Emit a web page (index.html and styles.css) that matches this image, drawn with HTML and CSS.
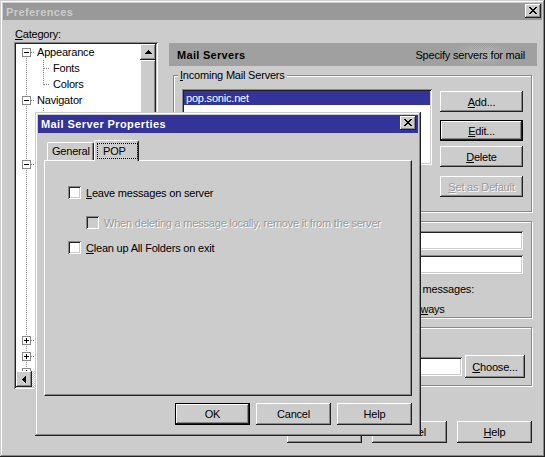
FILE: index.html
```html
<!DOCTYPE html>
<html lang="en">
<head>
    <meta charset="UTF-8">
    <title>Preferences</title>
    <link rel="stylesheet" href="styles.css">
</head>
<body>
    <div class="window prefs">
        <div class="titlebar inactive">
            <span class="title">Preferences</span>
            <span class="close-btn">
                <svg width="8" height="7" viewBox="0 0 8 7"><path d="M0 0h2v1H0zM6 0h2v1H6zM1 1h2v1H1zM5 1h2v1H5zM2 2h4v1H2zM3 3h2v1H3zM2 4h4v1H2zM1 5h2v1H1zM5 5h2v1H5zM0 6h2v1H0zM6 6h2v1H6z"/></svg>
            </span>
        </div>

        <div class="prefs-main">
            <div class="category">
                <div class="field-label"><u>C</u>ategory:</div>
                <div class="tree">
                    <div class="tree-items">
                        <div class="node"><span class="twisty"></span><span class="branch"></span>Appearance</div>
                        <div class="children">
                            <div class="node leaf"><span class="branch"></span>Fonts</div>
                            <div class="node leaf"><span class="branch"></span>Colors</div>
                        </div>
                        <div class="node"><span class="twisty"></span><span class="branch"></span>Navigator</div>
                        <div class="children">
                            <div class="node leaf"><span class="branch"></span>Languages</div>
                            <div class="node leaf"><span class="branch"></span>Applications</div>
                            <div class="node leaf"><span class="branch"></span>Smart Browsing</div>
                        </div>
                        <div class="node"><span class="twisty"></span><span class="branch"></span>Mail &amp; Newsgroups</div>
                        <div class="children">
                            <div class="node leaf"><span class="branch"></span>Identity</div>
                            <div class="node leaf current"><span class="branch"></span>Mail Servers</div>
                            <div class="node leaf"><span class="branch"></span>Newsgroup Servers</div>
                            <div class="node leaf"><span class="branch"></span>Addressing</div>
                            <div class="node leaf"><span class="branch"></span>Messages</div>
                            <div class="node leaf"><span class="branch"></span>Window Settings</div>
                            <div class="node leaf"><span class="branch"></span>Copies and Folders</div>
                            <div class="node leaf"><span class="branch"></span>Formatting</div>
                            <div class="node leaf"><span class="branch"></span>Return Receipts</div>
                            <div class="node leaf"><span class="branch"></span>Disk Space</div>
                        </div>
                        <div class="node"><span class="twisty closed"></span><span class="branch"></span>Roaming Access</div>
                        <div class="node"><span class="twisty closed"></span><span class="branch"></span>Composer</div>
                        <div class="node"><span class="twisty closed"></span><span class="branch"></span>Offline</div>
                        <div class="node"><span class="twisty closed"></span><span class="branch"></span>Advanced</div>
                    </div>
                    <div class="vscroll">
                        <span class="scroll-btn">
                            <svg width="7" height="4" viewBox="0 0 7 4"><path d="M3 0h1v1h1v1h1v1h1v1H0V3h1V2h1V1h1z"/></svg>
                        </span>
                        <div class="scroll-track"><div class="scroll-thumb"></div></div>
                    </div>
                    <div class="hscroll">
                        <span class="scroll-btn">
                            <svg width="4" height="7" viewBox="0 0 4 7"><path d="M3 0h1v7H3V6H2V5H1V4H0V3h1V2h1V1h1z"/></svg>
                        </span>
                        <div class="scroll-track"></div>
                    </div>
                    <div class="scroll-corner"></div>
                </div>
            </div>

            <div class="pane">
                <div class="pane-header">
                    <span class="pane-title">Mail Servers</span>
                    <span class="pane-desc">Specify servers for mail</span>
                </div>

                <div class="group group-incoming">
                    <div class="group-title"><u>I</u>ncoming Mail Servers</div>
                    <div class="incoming-row">
                        <div class="listbox">
                            <div class="list-item selected">pop.sonic.net</div>
                        </div>
                        <div class="btn-col">
                            <button class="btn btn-add"><u>A</u>dd...</button>
                            <button class="btn btn-edit default"><u>E</u>dit...</button>
                            <button class="btn btn-delete"><u>D</u>elete</button>
                            <button class="btn btn-set disabled"><u>S</u>et as Default</button>
                        </div>
                    </div>
                </div>

                <div class="group group-outgoing">
                    <div class="group-title">Outgoing Mail Server</div>
                    <div class="form-line first">
                        <label>Outgoing mail (SMTP) server:</label>
                        <span class="textbox"></span>
                    </div>
                    <div class="form-line">
                        <label>Outgoing mail server user name:</label>
                        <span class="textbox"></span>
                    </div>
                    <div class="note">Use SSL or TLS for outgoing messages:</div>
                    <div class="radios">
                        <span class="radio"><span class="radio-dot"></span><span><u>N</u>ever</span></span>
                        <span class="radio"><span class="radio-dot"></span><span><u>I</u>f Possible</span></span>
                        <span class="radio"><span class="radio-dot"></span><span>Al<u>w</u>ays</span></span>
                    </div>
                </div>

                <div class="group group-local">
                    <div class="group-title">Local mail directory</div>
                    <div class="dir-row">
                        <span class="textbox dir-box"></span>
                        <button class="btn btn-choose"><u>C</u>hoose...</button>
                    </div>
                </div>
            </div>
        </div>

        <div class="button-row prefs-buttons">
            <button class="btn">OK</button>
            <button class="btn">Cancel</button>
            <button class="btn"><u>H</u>elp</button>
        </div>
    </div>

    <!-- modal server dialog on top of the preferences window -->
    <div class="window dialog">
        <div class="titlebar">
            <span class="title">Mail Server Properties</span>
            <span class="close-btn">
                <svg width="8" height="7" viewBox="0 0 8 7"><path d="M0 0h2v1H0zM6 0h2v1H6zM1 1h2v1H1zM5 1h2v1H5zM2 2h4v1H2zM3 3h2v1H3zM2 4h4v1H2zM1 5h2v1H1zM5 5h2v1H5zM0 6h2v1H0zM6 6h2v1H6z"/></svg>
            </span>
        </div>

        <div class="tabs">
            <div class="tab">General</div>
            <div class="tab active"><span class="focus">POP</span></div>
        </div>

        <div class="tab-panel">
            <div class="check check-leave"><span class="checkbox"></span><span><u>L</u>eave messages on server</span></div>
            <div class="check check-delete sub disabled"><span class="checkbox"></span><span>When deleting a message locally, remove it from the server</span></div>
            <div class="check check-clean"><span class="checkbox"></span><span><u>C</u>lean up All Folders on exit</span></div>
        </div>

        <div class="button-row dialog-buttons">
            <button class="btn default">OK</button>
            <button class="btn">Cancel</button>
            <button class="btn">Help</button>
        </div>
    </div>
</body>
</html>
```

FILE: styles.css
```css
:root {
    --face: #cccccc;
    --light: #ffffff;
    --shadow: #888888;
    --dark: #222222;
    --title-active: #333399;
    --title-inactive: #999999;
    --header: #a0a0a0;
    --select: #333399;
    --raised: inset -1px -1px var(--dark), inset 1px 1px var(--light), inset -2px -2px var(--shadow);
    --sunken: inset 1px 1px var(--shadow), inset -1px -1px var(--light), inset 2px 2px var(--dark), inset -2px -2px var(--face);
}

* {
    box-sizing: border-box;
}

body {
    margin: 0;
    background: var(--face);
    font-family: "Liberation Sans", Arial, sans-serif;
    font-size: 11px;
    letter-spacing: -0.2px;
    color: #000;
}

u {
    text-decoration: underline;
    text-underline-offset: 1px;
}

/* windows */

.window {
    background: var(--face);
    box-shadow: inset -1px -1px var(--dark), inset 1px 1px var(--face), inset -2px -2px var(--shadow), inset 2px 2px var(--light);
    padding: 3px;
    display: flex;
    flex-direction: column;
}

.prefs {
    width: 545px;
    height: 457px;
}

.dialog {
    position: absolute;
    left: 35px;
    top: 112px;
    width: 386px;
    height: 324px;
}

.titlebar {
    height: 18px;
    display: flex;
    align-items: flex-start;
    justify-content: space-between;
    padding: 1px 2px 0 3px;
    background: var(--title-active);
    color: #fff;
}

.titlebar.inactive {
    height: 17px;
    padding-right: 1px;
    background: var(--title-inactive);
    color: var(--face);
}

.title {
    font-weight: bold;
    letter-spacing: 0.4px;
    line-height: 16px;
}

.close-btn {
    width: 16px;
    height: 14px;
    display: flex;
    align-items: center;
    justify-content: center;
    background: var(--face);
    box-shadow: var(--raised);
}

.close-btn svg {
    margin: 0 1px 1px 0;
}

/* buttons */

.btn {
    width: 75px;
    height: 21px;
    padding: 0;
    border: none;
    background: var(--face);
    box-shadow: var(--raised);
    font: inherit;
    letter-spacing: inherit;
    color: #000;
}

.btn.default {
    border: 1px solid #000;
}

.btn.disabled {
    color: #999;
    text-shadow: 1px 1px var(--light);
}

.button-row {
    display: flex;
    justify-content: flex-end;
}

.prefs-buttons {
    margin-top: auto;
    margin-bottom: 11px;
    padding-right: 10px;
    gap: 10px;
}

.prefs-buttons .btn {
    height: 22px;
}

/* preferences layout */

.prefs-main {
    display: grid;
    grid-template-columns: 144px 368px;
    column-gap: 11px;
    padding: 7px 0 0 11px;
}

.field-label {
    height: 15px;
    line-height: 15px;
    padding-left: 1px;
}

/* category tree */

.tree {
    width: 144px;
    height: 347px;
    padding: 2px;
    display: grid;
    grid-template-columns: 124px 16px;
    grid-template-rows: 327px 16px;
    background: #fff;
    box-shadow: var(--sunken);
}

.tree-items {
    overflow: hidden;
    background: repeating-linear-gradient(var(--shadow) 0 1px, transparent 1px 2px) 10px 8px / 1px 100% no-repeat;
}

.node {
    height: 16px;
    display: flex;
    align-items: center;
    padding-left: 6px;
    white-space: nowrap;
}

.twisty {
    flex: none;
    width: 9px;
    height: 9px;
    border: 1px solid var(--shadow);
    background: linear-gradient(#000, #000) center / 5px 1px no-repeat, #fff;
}

.twisty.closed {
    background: linear-gradient(#000, #000) center / 5px 1px no-repeat, linear-gradient(#000, #000) center / 1px 5px no-repeat, #fff;
}

.branch {
    flex: none;
    width: 4px;
    height: 1px;
    margin-right: 2px;
    background: repeating-linear-gradient(90deg, var(--shadow) 0 1px, transparent 1px 2px);
}

.children {
    background: repeating-linear-gradient(var(--shadow) 0 1px, transparent 1px 2px) 27px 0 / 1px calc(100% - 7px) no-repeat;
}

.leaf {
    padding-left: 28px;
}

.leaf .branch {
    width: 6px;
    margin-right: 3px;
}

.vscroll,
.hscroll {
    display: flex;
    background: var(--face);
}

.vscroll {
    flex-direction: column;
}

.scroll-btn {
    flex: none;
    width: 16px;
    height: 16px;
    display: flex;
    align-items: center;
    justify-content: center;
    background: var(--face);
    box-shadow: var(--raised);
}

.scroll-track {
    flex: 1;
    background: repeating-conic-gradient(var(--light) 0 25%, var(--face) 0 50%) 0 0 / 2px 2px;
}

.scroll-thumb {
    height: 60px;
    background: var(--face);
    box-shadow: var(--raised);
}

.scroll-corner {
    background: var(--face);
}

/* right pane */

.pane {
    padding-top: 16px;
}

.pane-header {
    height: 23px;
    display: flex;
    align-items: center;
    justify-content: space-between;
    padding: 0 12px 0 8px;
    background:
        linear-gradient(90deg, var(--header) 288px, rgba(160, 160, 160, 0.3) 302px, rgba(160, 160, 160, 0.3) 322px, var(--header) 338px),
        linear-gradient(var(--header), rgba(160, 160, 160, 0) 8px, rgba(160, 160, 160, 0) 15px, var(--header)),
        repeating-conic-gradient(#cdcdcd 0 25%, var(--header) 0 50%) 0 0 / 2px 2px;
}

.pane-title {
    font-weight: bold;
    letter-spacing: 0.3px;
}

.group {
    margin: 9px 5px 0 4px;
    padding: 0 8px;
    border: 1px solid var(--shadow);
    box-shadow: inset 1px 1px var(--light), 1px 1px var(--light);
}

.group-title {
    display: table;
    margin: -7px 0 0 -4px;
    padding: 0 2px;
    line-height: 13px;
    background: var(--face);
}

.group-incoming {
    height: 137px;
}

.incoming-row {
    display: flex;
    gap: 8px;
    margin-top: 7px;
}

.listbox {
    width: 250px;
    height: 76px;
    padding: 2px;
    background: #fff;
    box-shadow: var(--sunken);
}

.list-item {
    height: 14px;
    line-height: 14px;
    padding-left: 2px;
}

.list-item.selected {
    background: var(--select);
    color: #fff;
}

.btn-col {
    display: flex;
    flex-direction: column;
    padding-top: 2px;
}

.btn-col .btn {
    width: 83px;
}

.btn-edit {
    margin-top: 8px;
}

.btn-delete {
    margin-top: 5px;
}

.btn-set {
    margin-top: 9px;
}

.group-outgoing {
    height: 97px;
}

.form-line {
    display: flex;
    justify-content: space-between;
    align-items: center;
    margin-top: 2px;
}

.form-line.first {
    margin-top: 3px;
}

.textbox {
    display: block;
    width: 200px;
    height: 19px;
    background: #fff;
    box-shadow: var(--sunken);
}

.note {
    margin-top: 6px;
    line-height: 15px;
    white-space: nowrap;
    text-align: right;
    padding-right: 49px;
}

.radios {
    display: grid;
    grid-template-columns: 92px 113px auto;
    margin-top: 5px;
    padding-left: 8px;
    line-height: 15px;
}

.radio {
    display: flex;
    align-items: center;
    gap: 4px;
}

.radio-dot {
    width: 12px;
    height: 12px;
    border-radius: 50%;
    background: #fff;
    box-shadow: var(--sunken);
}

.group-local {
    height: 59px;
}

.dir-row {
    display: flex;
    justify-content: flex-end;
    align-items: center;
    gap: 3px;
    margin: 21px -2px 0 0;
}

.dir-box {
    width: 180px;
}

.btn-choose {
    width: 60px;
    height: 23px;
}

/* dialog tabs */

.tabs {
    display: flex;
    align-items: flex-end;
    height: 20px;
    margin: 7px 0 0 9px;
}

.tab {
    height: 18px;
    line-height: 16px;
    padding-left: 4px;
    border-top: 1px solid var(--light);
    border-left: 1px solid var(--light);
    border-right: 1px solid var(--dark);
    border-radius: 2px 2px 0 0;
    box-shadow: inset -1px 0 var(--shadow);
    background: var(--face);
    white-space: nowrap;
}

.tab:first-child {
    width: 47px;
}

.tab.active {
    position: relative;
    z-index: 1;
    width: 45px;
    height: 21px;
    margin-bottom: -1px;
    padding: 2px 1px 0 2px;
}

.focus {
    display: block;
    width: 41px;
    height: 16px;
    line-height: 14px;
    padding-left: 5px;
    border: 1px dotted #000;
}

.tab-panel {
    height: 236px;
    margin: 0 6px;
    padding: 24px 0 0 23px;
    border-top: 1px solid var(--light);
    border-left: 1px solid var(--light);
    border-right: 1px solid var(--dark);
    border-bottom: 1px solid var(--dark);
    box-shadow: inset -1px -1px var(--shadow);
}

.check {
    display: flex;
    align-items: center;
    gap: 5px;
    height: 15px;
    white-space: nowrap;
}

.checkbox {
    flex: none;
    width: 13px;
    height: 13px;
    background: #fff;
    box-shadow: var(--sunken);
}

.check.sub {
    margin: 15px 0 0 18px;
}

.check-clean {
    margin-top: 10px;
}

.check.disabled {
    color: #999;
    text-shadow: 1px 1px var(--light);
}

.check.disabled .checkbox {
    background: var(--face);
}

.dialog-buttons {
    margin-top: 7px;
    padding-right: 6px;
    gap: 6px;
}

.dialog-buttons .btn {
    height: 22px;
}
```
